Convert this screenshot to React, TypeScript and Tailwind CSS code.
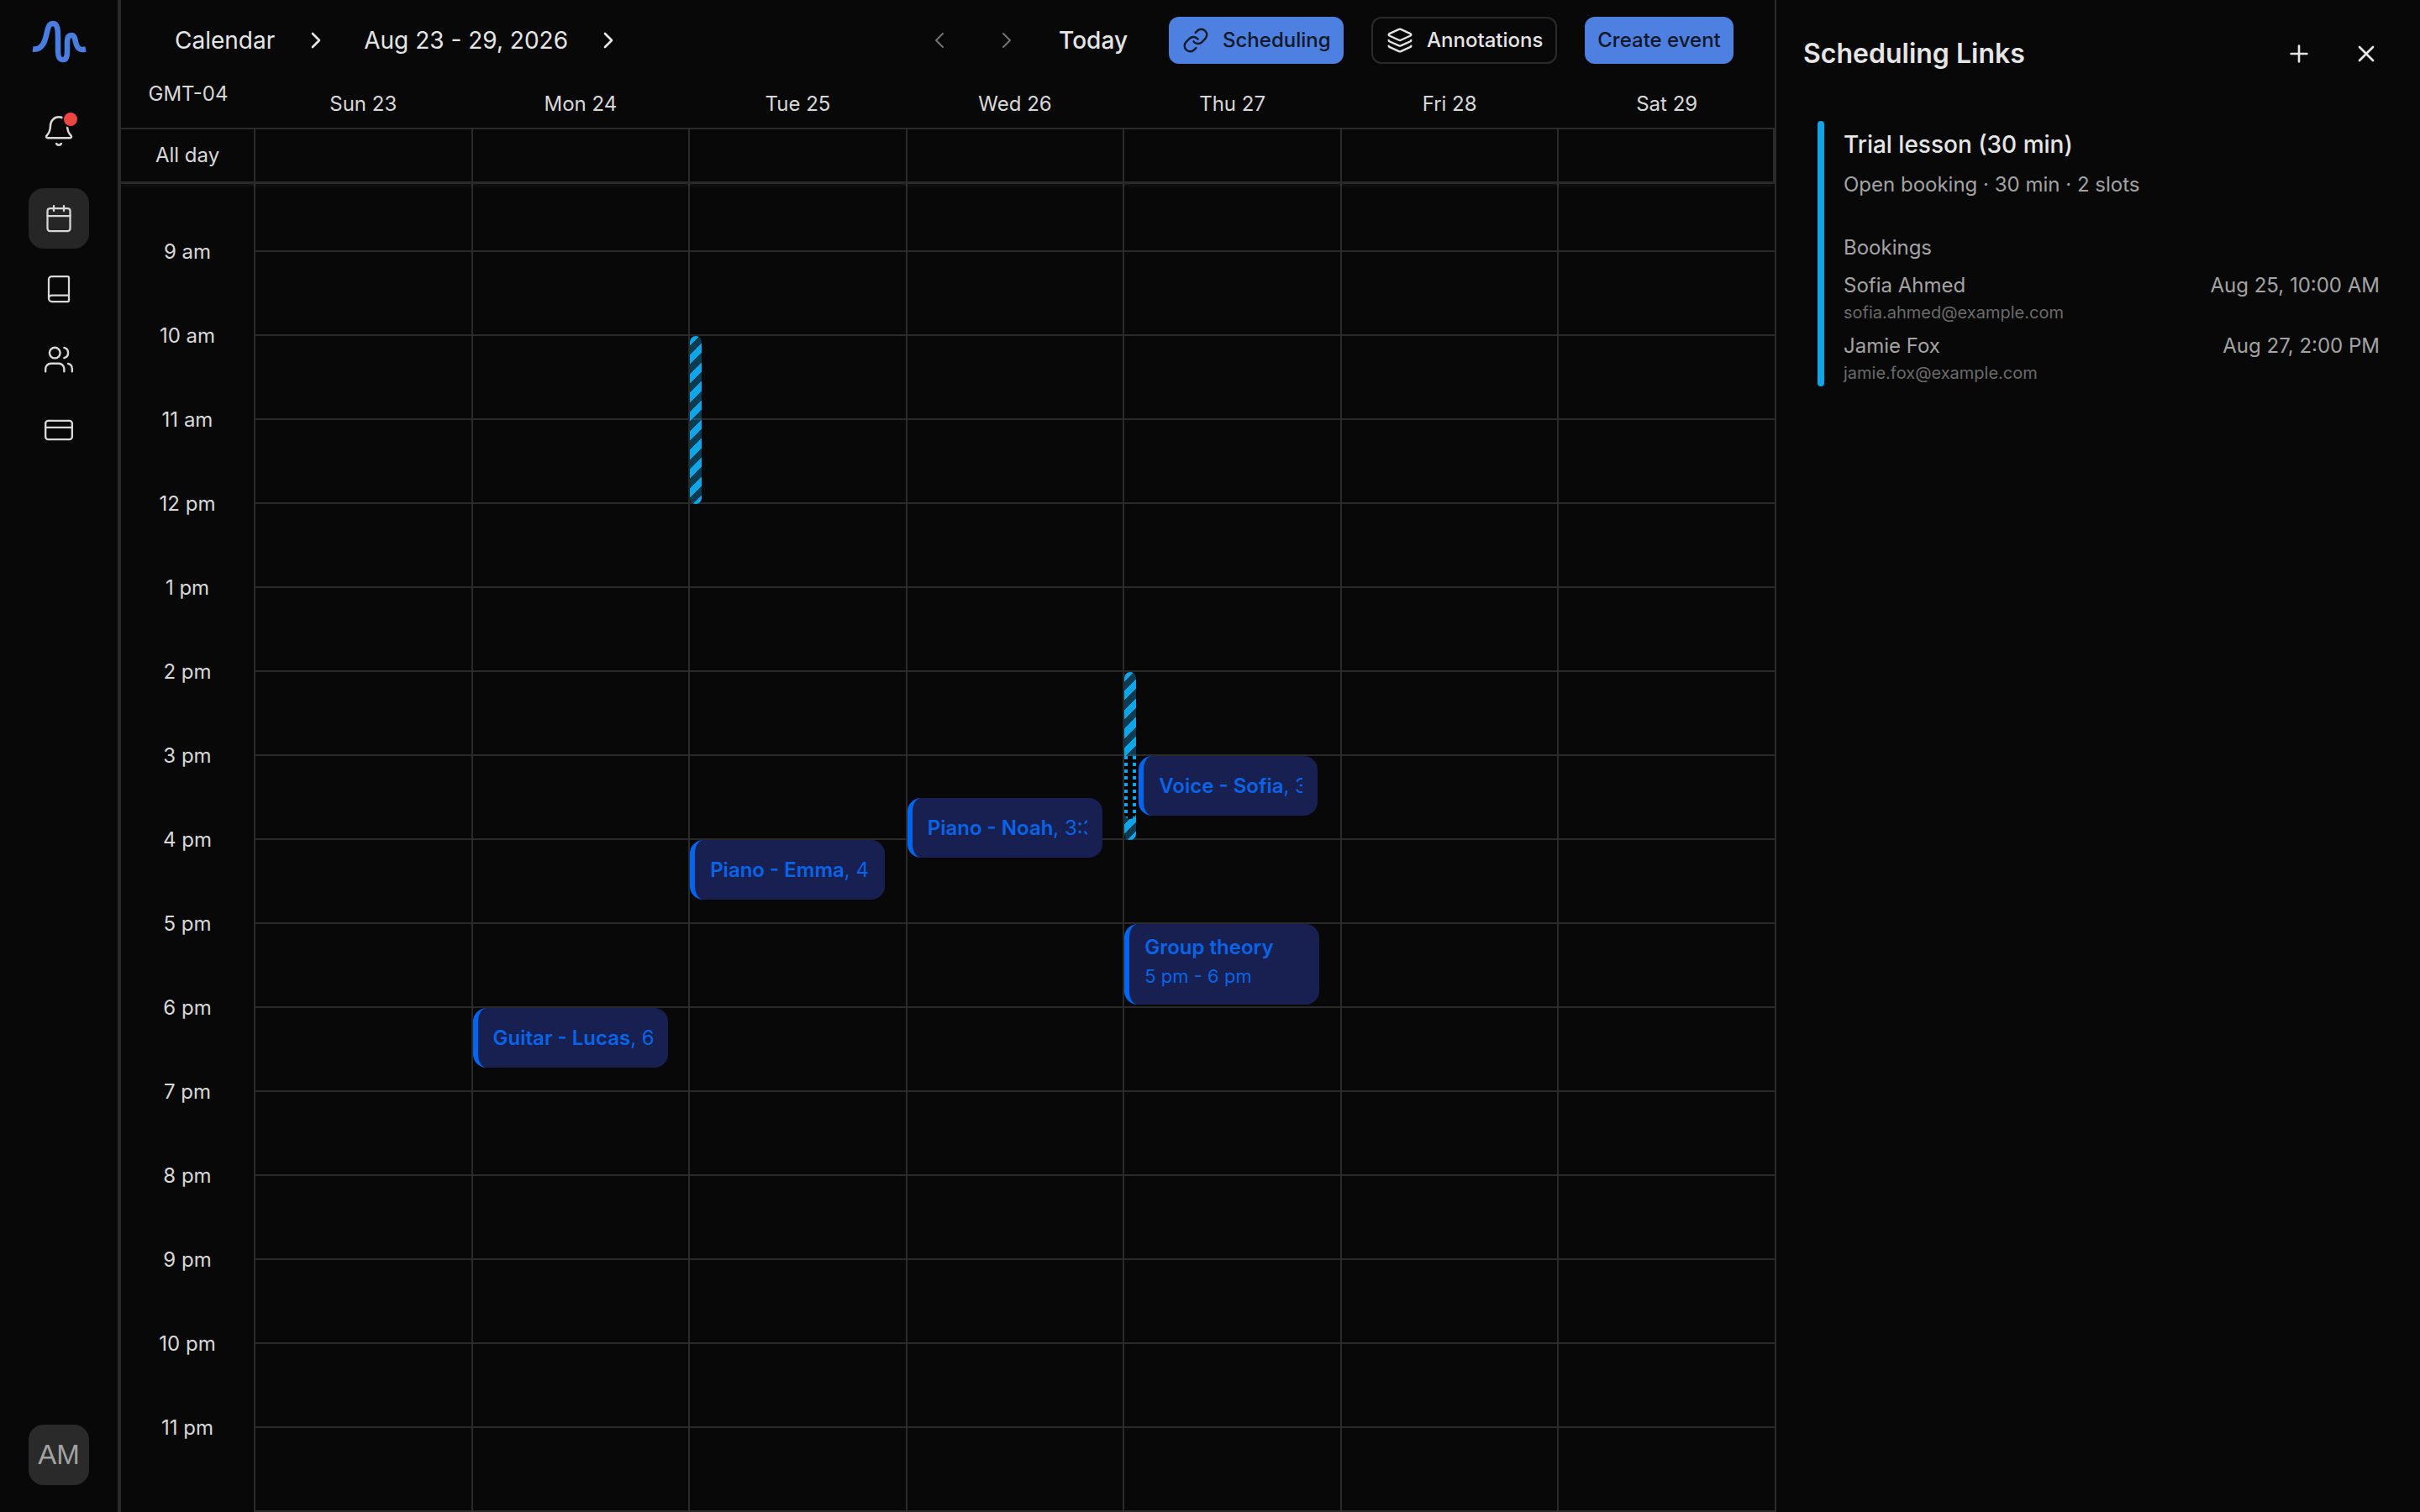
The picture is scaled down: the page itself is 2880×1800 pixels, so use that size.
import {
  Bell,
  Book,
  Calendar,
  ChevronLeft,
  ChevronRight,
  CreditCard,
  Layers,
  Link,
  Plus,
  Users,
  X,
} from "lucide-react";

const days = ["Sun 23", "Mon 24", "Tue 25", "Wed 26", "Thu 27", "Fri 28", "Sat 29"];
const hours = [
  "9 am", "10 am", "11 am", "12 pm", "1 pm", "2 pm", "3 pm", "4 pm",
  "5 pm", "6 pm", "7 pm", "8 pm", "9 pm", "10 pm", "11 pm",
];
const stripes =
  "bg-[repeating-linear-gradient(135deg,#0ea5e9_0_8px,rgba(14,165,233,0.33)_8px_16px)]";
const dots = "bg-[repeating-linear-gradient(180deg,#0ea5e9_0_4px,transparent_4px_8px)]";

function Logo() {
  return (
    <svg width="72" height="60" viewBox="34 22 72 60" fill="none">
      <path
        d="M39 60.5C51 62 54 50 56 40C58 31 60 30 63 30C69 30 69 38 69 50L69 62C69 71 71 73 75 73C79 73 80 70 80 60L80 52C80 46 82 44 85 44C89 44 89 48 90 52C92 60 95 62 102 60.5"
        stroke="#4a7de0"
        strokeWidth="6.5"
      />
    </svg>
  );
}

function NavIcon({ children, active }: { children: React.ReactNode; active?: boolean }) {
  return (
    <div
      className={
        active
          ? "flex h-[72px] w-[72px] items-center justify-center rounded-[18px] bg-[#262626] text-[#d8d8d8]"
          : "flex h-[72px] w-[72px] items-center justify-center rounded-[18px] text-[#d8d8d8]"
      }
    >
      {children}
    </div>
  );
}

function Sidebar() {
  return (
    <aside className="flex h-full w-[144px] shrink-0 flex-col items-center border-r-4 border-[#2a2a2a] pt-[20px] pb-[32px]">
      <Logo />
      <div className="mt-[40px] mb-[32px]">
        <div className="relative flex h-[72px] w-[72px] items-center justify-center text-[#d8d8d8]">
          <Bell size={40} strokeWidth={1.5} />
          <span className="absolute top-[12px] left-[40px] h-[20px] w-[20px] rounded-full border-2 border-[#080808] bg-[#ef4444]" />
        </div>
      </div>
      <div className="flex flex-col gap-3">
        <NavIcon active>
          <Calendar size={36} strokeWidth={1.5} />
        </NavIcon>
        <NavIcon>
          <Book size={36} strokeWidth={1.5} />
        </NavIcon>
        <NavIcon>
          <Users size={38} strokeWidth={1.5} />
        </NavIcon>
        <NavIcon>
          <CreditCard size={38} strokeWidth={1.5} />
        </NavIcon>
      </div>
      <div className="mt-auto flex h-[72px] w-[72px] items-center justify-center rounded-[18px] bg-[#2a2a2a] font-['Liberation_Sans',sans-serif] text-[33px] text-[#a3a3a3]">
        AM
      </div>
    </aside>
  );
}

function TopBar() {
  return (
    <header className="flex h-[96px] shrink-0 items-center pr-[49px] pl-[64px] text-[#e5e5e5]">
      <span className="text-[28px]">Calendar</span>
      <ChevronRight size={32} strokeWidth={2} className="ml-[33px]" />
      <span className="ml-[41px] text-[28px]">Aug 23 - 29, 2026</span>
      <ChevronRight size={32} strokeWidth={2} className="ml-[32px]" />
      <div className="ml-auto flex items-center">
        <ChevronLeft size={32} strokeWidth={1.5} className="text-[#737373]" />
        <ChevronRight size={32} strokeWidth={1.5} className="ml-[48px] text-[#737373]" />
        <span className="ml-[46px] text-[28px] font-medium">Today</span>
        <button className="ml-[49px] flex h-[56px] w-[208px] items-center gap-[16px] rounded-[12px] bg-[#4d80e1] pl-[16px] text-[24px] font-medium text-[#111827]">
          <Link size={32} strokeWidth={1.75} />
          Scheduling
        </button>
        <button className="ml-[33px] flex h-[56px] w-[221px] items-center gap-[16px] rounded-[12px] border-2 border-[#2a2a2a] pl-[16px] text-[24px] font-medium text-[#e5e5e5]">
          <Layers size={32} strokeWidth={1.75} />
          Annotations
        </button>
        <button className="ml-[33px] flex h-[56px] w-[177px] items-center justify-center rounded-[12px] bg-[#4d80e1] text-[24px] font-medium text-[#111827]">
          Create event
        </button>
      </div>
    </header>
  );
}

function DayColumn({ children }: { children?: React.ReactNode }) {
  return (
    <div className="relative border-l-2 border-[#2a2a2a]">
      <div className="h-[81px] border-b-2 border-[#2a2a2a]" />
      {hours.map((h) => (
        <div key={h} className="h-[100px] border-b-2 border-[#2a2a2a]" />
      ))}
      {children}
    </div>
  );
}

function EventCard({
  className,
  title,
  inlineTime,
  time,
}: {
  className: string;
  title: string;
  inlineTime?: string;
  time?: string;
}) {
  return (
    <div
      className={`absolute z-10 flex flex-col overflow-hidden rounded-[16px] border-l-[6px] border-[#0066f0] bg-[#172050] px-[18px] whitespace-nowrap text-[24px] text-[#0a64e8] ${className}`}
    >
      <div className="overflow-hidden leading-[32px]">
        <span className="font-semibold">{title}</span>
        {inlineTime}
      </div>
      {time && <div className="mt-[2px] overflow-hidden text-[22px] leading-[32px]">{time}</div>}
    </div>
  );
}

function CalendarView() {
  return (
    <main className="flex min-w-0 flex-1 flex-col overflow-hidden">
      <TopBar />
      <div className="grid h-[58px] shrink-0 grid-cols-[158px_repeat(7,1fr)] border-b-2 border-[#2a2a2a] text-[24px] text-[#d8d8d8]">
        <div className="pb-[24px] pl-[2px] text-center leading-[32px]">GMT-04</div>
        {days.map((d) => (
          <div key={d} className="flex items-center justify-center pl-[2px]">
            {d}
          </div>
        ))}
      </div>
      <div className="relative z-20 grid h-[65px] shrink-0 grid-cols-[158px_repeat(7,1fr)] border-b-[3px] border-[#2a2a2a] shadow-[0_2px_5px_rgba(255,255,255,0.06)]">
        <div className="flex items-center justify-center text-[24px] text-[#d8d8d8]">All day</div>
        {days.map((d) => (
          <div key={d} className="border-l-2 border-[#2a2a2a] last:border-r-2" />
        ))}
      </div>
      <div className="grid flex-1 grid-cols-[158px_repeat(7,1fr)] overflow-hidden">
        <div className="flex flex-col pt-[31px] text-[24px] text-[#d8d8d8]">
          {hours.map((h) => (
            <div key={h} className="flex h-[100px] shrink-0 items-center justify-center">
              {h}
            </div>
          ))}
        </div>
        <DayColumn />
        <DayColumn>
          <EventCard className="top-[981px] left-0 h-[71px] w-[232px] justify-center" title="Guitar - Lucas" inlineTime=", 6 pm" />
        </DayColumn>
        <DayColumn>
          <div className={`absolute top-[181px] left-0 h-[200px] w-[14px] rounded-[8px] ${stripes}`} />
          <EventCard className="top-[781px] left-0 h-[71px] w-[232px] justify-center" title="Piano - Emma" inlineTime=", 4 pm" />
        </DayColumn>
        <DayColumn>
          <EventCard className="top-[731px] left-0 h-[71px] w-[232px] justify-center" title="Piano - Noah" inlineTime=", 3:30 pm" />
        </DayColumn>
        <DayColumn>
          <div className={`absolute top-[581px] left-0 h-[200px] w-[14px] rounded-[8px] ${stripes}`} />
          <div className="absolute top-[681px] left-0 flex h-[75px] w-[14px] justify-between overflow-hidden rounded-b-[8px] bg-[#050505]">
            <div className={`w-[4px] ${dots}`} />
            <div className={`w-[4px] ${dots}`} />
          </div>
          <EventCard className="top-[681px] left-[17px] h-[71px] w-[213px] justify-center" title="Voice - Sofia" inlineTime=", 3 pm" />
          <EventCard className="top-[881px] left-0 h-[96px] w-[232px] pt-[12px]" title="Group theory" time="5 pm - 6 pm" />
        </DayColumn>
        <DayColumn />
        <DayColumn />
      </div>
    </main>
  );
}

function Booking({ name, email, date }: { name: string; email: string; date: string }) {
  return (
    <div className="flex justify-between">
      <div>
        <div className="text-[24px] leading-[34px] text-[#a3a3a3]">{name}</div>
        <div className="text-[20px] leading-[30px] text-[#6b6b6b]">{email}</div>
      </div>
      <div className="text-[24px] leading-[34px] text-[#a3a3a3]">{date}</div>
    </div>
  );
}

function SchedulingPanel() {
  return (
    <section className="flex h-full w-[768px] shrink-0 flex-col border-l-2 border-[#2a2a2a] pr-[48px] pl-[32px]">
      <div className="flex h-[128px] shrink-0 items-center text-[#e5e5e5]">
        <h2 className="text-[32px] font-semibold">Scheduling Links</h2>
        <Plus size={32} strokeWidth={2} className="mr-[48px] ml-auto" />
        <X size={32} strokeWidth={2} />
      </div>
      <div className="mt-[16px] ml-[17px] flex gap-[23px]">
        <div className="h-[316px] w-[8px] shrink-0 rounded-full bg-[#0ea5e9]" />
        <div className="flex-1">
          <div className="mt-[10px] text-[28px] leading-[36px] font-medium text-[#e5e5e5]">
            Trial lesson (30 min)
          </div>
          <div className="mt-[13px] text-[24px] leading-[34px] text-[#a3a3a3]">
            Open booking · 30 min · 2 slots
          </div>
          <div className="mt-[41px] text-[24px] leading-[34px] text-[#a3a3a3]">Bookings</div>
          <div className="mt-[11px] flex flex-col gap-[8px]">
            <Booking name="Sofia Ahmed" email="sofia.ahmed@example.com" date="Aug 25, 10:00 AM" />
            <Booking name="Jamie Fox" email="jamie.fox@example.com" date="Aug 27, 2:00 PM" />
          </div>
        </div>
      </div>
    </section>
  );
}

export default function App() {
  return (
    <div className="flex h-screen w-full overflow-hidden bg-[#080808] font-['Inter',sans-serif]">
      <Sidebar />
      <CalendarView />
      <SchedulingPanel />
    </div>
  );
}
